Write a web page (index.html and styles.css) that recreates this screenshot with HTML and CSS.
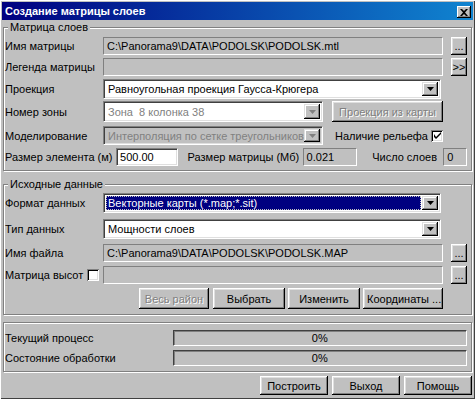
FILE: index.html
```html
<!DOCTYPE html>
<html lang="ru">
<head>
<meta charset="UTF-8">
<title>Создание матрицы слоев</title>
<link rel="stylesheet" href="styles.css">
</head>
<body>
<div class="window">

  <div class="titlebar">
    <span class="title">Создание матрицы слоев</span>
    <span class="close">
      <svg viewBox="0 0 8 7" width="8" height="7"><path d="M0 0h2l2 2 2-2h2L5 3.5 8 7H6L4 5 2 7H0l3-3.5z"/></svg>
    </span>
  </div>

  <!-- Матрица слоев -->
  <div class="group g1">
    <span class="legend">Матрица слоев</span>

    <div class="row r1">
      <span class="lbl">Имя матрицы</span>
      <div class="field ro w340">C:\Panorama9\DATA\PODOLSK\PODOLSK.mtl</div>
      <span class="btn side dots">...</span>
    </div>

    <div class="row r2">
      <span class="lbl">Легенда матрицы</span>
      <div class="field ro w340"></div>
      <span class="btn side">&gt;&gt;</span>
    </div>

    <div class="row r3">
      <span class="lbl">Проекция</span>
      <div class="combo w338">
        <span class="combo-text">Равноугольная проекция Гаусса-Крюгера</span>
        <span class="arrow"><svg viewBox="0 0 7 4" width="7" height="4"><path d="M0 0h7L3.5 4z"/></svg></span>
      </div>
    </div>

    <div class="row r4">
      <span class="lbl">Номер зоны</span>
      <div class="combo w220 off-text">
        <span class="combo-text">Зона&nbsp; 8 колонка 38</span>
        <span class="arrow off"><svg viewBox="0 0 7 4" width="7" height="4"><path d="M0 0h7L3.5 4z"/></svg></span>
      </div>
      <span class="btn disabled proj">Проекция из карты</span>
    </div>

    <div class="row r5">
      <span class="lbl">Моделирование</span>
      <div class="combo w220 grey off-text">
        <span class="combo-text">Интерполяция по сетке треугольников</span>
        <span class="arrow off"><svg viewBox="0 0 7 4" width="7" height="4"><path d="M0 0h7L3.5 4z"/></svg></span>
      </div>
      <span class="relief">Наличие рельефа</span>
      <span class="check">
        <svg viewBox="0 0 7 7" width="7" height="7"><path d="M0 2v3l2 2 5-5V0L2 5z"/></svg>
      </span>
    </div>

    <div class="row r6">
      <span class="lbl-size">Размер элемента (м)</span>
      <div class="field edit w62">500.00</div>
      <span class="lbl-msize">Размер матрицы (Мб)</span>
      <div class="field ro w55">0.021</div>
      <span class="lbl-count">Число слоев</span>
      <div class="field ro w24">0</div>
    </div>
  </div>

  <!-- Исходные данные -->
  <div class="group g2">
    <span class="legend">Исходные данные</span>

    <div class="row q1">
      <span class="lbl">Формат данных</span>
      <div class="combo w338">
        <span class="combo-text selected">Векторные карты (*.map;*.sit)</span>
        <span class="arrow"><svg viewBox="0 0 7 4" width="7" height="4"><path d="M0 0h7L3.5 4z"/></svg></span>
      </div>
    </div>

    <div class="row q2">
      <span class="lbl">Тип данных</span>
      <div class="combo w338">
        <span class="combo-text">Мощности слоев</span>
        <span class="arrow"><svg viewBox="0 0 7 4" width="7" height="4"><path d="M0 0h7L3.5 4z"/></svg></span>
      </div>
    </div>

    <div class="row q3">
      <span class="lbl">Имя файла</span>
      <div class="field ro w340">C:\Panorama9\DATA\PODOLSK\PODOLSK.MAP</div>
      <span class="btn side dots">...</span>
    </div>

    <div class="row q4">
      <span class="lbl lbl-check">Матрица высот <span class="check"></span></span>
      <div class="field ro w340"></div>
      <span class="btn side dots">...</span>
    </div>

    <div class="row q5 actions">
      <span class="btn disabled b70">Весь район</span>
      <span class="btn b72">Выбрать</span>
      <span class="btn b72">Изменить</span>
      <span class="btn b80">Координаты ...</span>
    </div>
  </div>

  <!-- Ход обработки -->
  <div class="group g3">
    <div class="row p1">
      <span class="lbl-prog">Текущий процесс</span>
      <div class="progress">0%</div>
    </div>
    <div class="row p2">
      <span class="lbl-prog">Состояние обработки</span>
      <div class="progress">0%</div>
    </div>
  </div>

  <div class="footer">
    <span class="btn b68">Построить</span>
    <span class="btn b68">Выход</span>
    <span class="btn b68">Помощь</span>
  </div>

</div>
</body>
</html>
```

FILE: styles.css
```css
*, *::before, *::after { box-sizing: border-box; margin: 0; padding: 0; }

:root {
  --face: #c0c0c0;
  --light: #dfdfdf;
  --shadow: #808080;
  --dark: #404040;
  --navy: #000080;
}

body {
  width: 475px;
  height: 399px;
  overflow: hidden;
  font-family: "Liberation Sans", Arial, sans-serif;
  font-size: 11px;
  color: #000;
  background: var(--face);
}

.window {
  height: 399px;
  padding: 2px;
  background: var(--face);
  box-shadow: inset 1px 1px #fff, inset -1px -1px var(--dark);
}

/* ── TITLE BAR ── */
.titlebar {
  height: 18px;
  display: flex;
  align-items: center;
  justify-content: space-between;
  padding: 0 2px 0 3px;
  background: linear-gradient(90deg, var(--navy), #1084d0);
  color: #fff;
  font-weight: bold;
  font-size: 11px;
}

.close {
  width: 14px;
  height: 12px;
  margin-top: 2px;
  display: flex;
  align-items: center;
  justify-content: center;
  background: var(--face);
  box-shadow: inset -1px -1px #000, inset 1px 1px #fff, inset -2px -2px var(--shadow);
}
.close svg { fill: #000; }

/* ── GROUP BOXES ── */
.group {
  position: relative;
  margin: 0 1px;
  border: 1px solid var(--shadow);
  box-shadow: 1px 1px 0 #fff, inset 1px 1px 0 #fff;
  padding: 0 4px 0 1px;
}
.g1 { margin-top: 7px; padding-top: 9px; padding-bottom: 4px; }
.g2 { margin-top: 13px; padding-top: 8px; padding-bottom: 5px; }
.g3 { margin-top: 7px; padding-top: 7px; padding-bottom: 5px; }

.legend {
  position: absolute;
  top: -7px;
  left: 4px;
  padding: 0 2px;
  background: var(--face);
  line-height: 13px;
}

.row {
  display: flex;
  align-items: center;
}
.r1 { height: 18px; }
.r2 { height: 18px; margin-top: 3px; }
.r3 { height: 20px; margin-top: 3px; }
.r4 { height: 21px; margin-top: 2px; }
.r5 { height: 19px; margin-top: 4px; }
.r6 { height: 18px; margin-top: 3px; }

.q1 { height: 20px; }
.q2 { height: 20px; margin-top: 6px; }
.q3 { height: 18px; margin-top: 5px; }
.q4 { height: 18px; margin-top: 4px; }
.q5 { height: 21px; margin-top: 4px; }

.p1 { height: 16px; }
.p2 { height: 16px; margin-top: 4px; }

.lbl { width: 98px; flex-shrink: 0; white-space: nowrap; }
.lbl-check { display: flex; align-items: center; gap: 4px; }

/* ── FIELDS ── */
.field {
  height: 100%;
  display: flex;
  align-items: center;
  padding-left: 3px;
  white-space: nowrap;
  overflow: hidden;
  border: 1px solid;
  border-color: var(--shadow) #fff #fff var(--shadow);
  box-shadow: inset 1px 1px var(--dark), inset -1px -1px var(--light);
}
.field.ro { background: var(--face); box-shadow: none; }
.field.edit { background: #fff; }

.w340 { width: 340px; }
.w338 { width: 338px; }
.w220 { width: 220px; }
.w62 { width: 62px; margin-left: 2px; }
.w55 { width: 55px; }
.w24 { width: 24px; margin-left: 7px; }

.lbl-size { width: 110px; white-space: nowrap; }
.lbl-msize { width: 116px; margin-left: 10px; white-space: nowrap; }
.lbl-count { width: 64px; margin-left: 15px; white-space: nowrap; }

/* ── COMBO BOXES ── */
.combo {
  height: 100%;
  display: flex;
  align-items: center;
  background: #fff;
  border: 1px solid;
  border-color: var(--shadow) #fff #fff var(--shadow);
  box-shadow: inset 1px 1px var(--dark), inset -1px -1px var(--light);
  padding: 2px;
}
.combo.grey { background: var(--face); }

.combo-text {
  flex: 1;
  height: 100%;
  display: flex;
  align-items: center;
  padding-left: 2px;
  white-space: nowrap;
  overflow: hidden;
}
.combo-text.selected {
  background: var(--navy);
  color: #fff;
  outline: 1px dotted #c0c0c0;
  outline-offset: -1px;
  margin-right: 1px;
}
.off-text .combo-text { color: var(--shadow); }

.arrow {
  width: 16px;
  height: 100%;
  flex-shrink: 0;
  display: flex;
  align-items: center;
  justify-content: center;
  background: var(--face);
  box-shadow: inset -1px -1px #000, inset 1px 1px var(--light), inset -2px -2px var(--shadow), inset 2px 2px #fff;
}
.arrow svg { fill: #000; }
.arrow.off svg { fill: var(--shadow); }

/* ── BUTTONS ── */
.btn {
  height: 100%;
  display: flex;
  align-items: center;
  justify-content: center;
  flex-shrink: 0;
  white-space: nowrap;
  background: var(--face);
  box-shadow: inset -1px -1px #000, inset 1px 1px #fff, inset -2px -2px var(--shadow), inset 2px 2px var(--light);
}
.btn.disabled { color: var(--shadow); text-shadow: 1px 1px #fff; }

.side { width: 16px; margin-left: 8px; }
.dots { align-items: flex-end; padding-bottom: 3px; line-height: 1; }
.proj { width: 111px; margin-left: 9px; }

.actions { justify-content: flex-end; padding-right: 24px; gap: 3px; }
.b70 { width: 70px; margin-right: 1px; }
.b72 { width: 72px; }
.b80 { width: 80px; justify-content: flex-start; padding-left: 4px; }

/* ── CHECKBOX ── */
.relief { margin-left: 12px; white-space: nowrap; }
.check {
  width: 12px;
  height: 12px;
  flex-shrink: 0;
  display: flex;
  align-items: center;
  justify-content: center;
  background: #fff;
  box-shadow: inset 1px 1px var(--shadow), inset -1px -1px #fff, inset 2px 2px #000, inset -2px -2px var(--light);
}
.r5 .check { margin-left: auto; margin-right: 24px; }
.check svg { fill: #000; }

/* ── PROGRESS ── */
.lbl-prog { width: 168px; white-space: nowrap; }
.progress {
  width: 295px;
  height: 100%;
  display: flex;
  align-items: center;
  justify-content: center;
  border: 1px solid;
  border-color: var(--dark) #fff #fff var(--dark);
  box-shadow: inset 1px 1px var(--shadow);
}

/* ── FOOTER ── */
.footer {
  height: 19px;
  margin: 4px 1px 0 0;
  display: flex;
  justify-content: flex-end;
  gap: 4px;
}
.b68 { width: 68px; }
```
